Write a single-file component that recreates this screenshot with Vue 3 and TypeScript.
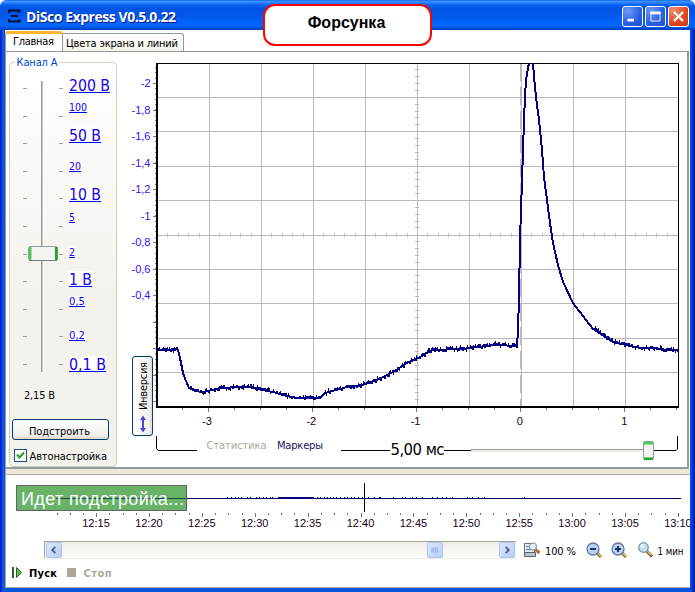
<script setup lang="ts">
interface RangeMark { text: string; base: number; width: number; big: boolean }
interface Speck { x: number; y: number; w: number; h: number }

const marks: RangeMark[] = [
  { text: '200 В', base: 91, width: 41, big: true },
  { text: '100', base: 111, width: 18, big: false },
  { text: '50 В', base: 141, width: 32, big: true },
  { text: '20', base: 170, width: 12, big: false },
  { text: '10 В', base: 200, width: 32, big: true },
  { text: '5', base: 221, width: 6, big: false },
  { text: '2', base: 256, width: 6, big: false },
  { text: '1 В', base: 285, width: 23, big: true },
  { text: '0,5', base: 305, width: 16, big: false },
  { text: '0,2', base: 339, width: 16, big: false },
  { text: '0,1 В', base: 370, width: 37, big: true },
]
const sliderTicks = [88, 116, 143, 171, 198, 226, 254, 281, 309, 336, 364]

const gridX = [209, 261, 313, 365, 417, 469, 521, 573, 625]
const gridY = [97, 131, 166, 200, 235, 269, 303, 338, 372]
const centreY = Array.from({ length: 50 }, (_, i) => i)
  .filter((i) => i % 5 !== 0)
  .map((i) => Math.round(62.5 + i * 6.87))
const centreX = Array.from({ length: 50 }, (_, i) => i)
  .filter((i) => i % 5 !== 0)
  .map((i) => Math.round(157 + i * 10.4))

const yLabels = ['-2', '-1,8', '-1,6', '-1,4', '-1,2', '-1', '-0,8', '-0,6', '-0,4']
const yMajor = Array.from({ length: 13 }, (_, i) => Math.round(83 + i * 26.5))
const yMinor = Array.from({ length: 65 }, (_, i) => Math.round(67 + i * 5.3)).filter((y) => y < 405)
const xLabels = ['-3', '-2', '-1', '0', '1']
const xTicks = Array.from({ length: 20 }, (_, i) => ({ x: Math.round(181.5 + i * 26.05), major: i % 4 === 1 }))

let seed = 11
function rnd(): number {
  seed = (seed * 1103515245 + 12345) % 2147483648
  return seed / 2147483648
}

const rising: [number, number][] = [
  [157, 350], [175, 350], [177, 348], [178, 350], [180, 358], [183, 373], [186, 381], [189, 388], [195, 391],
  [203, 392], [212, 390], [220, 388], [240, 387], [249, 387], [257, 389], [273, 392], [287, 396], [298, 398],
  [320, 398], [325, 393], [340, 389], [347, 387], [360, 386], [377, 380], [393, 372], [407, 363], [420, 357],
  [432, 350], [462, 349], [486, 346], [496, 345], [517, 346], [518, 330], [519, 297], [520, 240], [521, 210],
  [522, 180], [523, 150], [524, 120], [525, 97], [526, 80], [528, 68], [529, 63],
]
const falling: [number, number][] = [
  [533, 63], [534, 77], [536, 97], [539, 120],
  [542, 150], [544, 177], [547, 200], [550, 223], [553, 243], [558, 265], [563, 282], [573, 303], [586, 320],
  [593, 329], [601, 334], [613, 342], [626, 345], [640, 348], [656, 348], [663, 350], [678, 350],
]
const toPath = (pts: [number, number][]) => 'M' + pts.map(([x, y]) => `${x} ${y}`).join('L')
const wavePath = toPath(rising) + toPath(falling)

function specksFor(pts: [number, number][]): Speck[] {
  const out: Speck[] = []
  for (let i = 0; i < pts.length - 1; i++) {
    const [x0, y0] = pts[i]
    const [x1, y1] = pts[i + 1]
    if (Math.abs(y1 - y0) > (x1 - x0) * 0.9) continue
    for (let x = x0; x < x1; x++) {
      const r = rnd()
      const y = Math.round(y0 + ((y1 - y0) * (x - x0)) / (x1 - x0))
      if (r > 0.95) out.push({ x, y: y - 4, w: 1, h: 4 })
      else if (r > 0.78) out.push({ x, y: y - 3, w: 1, h: 3 })
      else if (r > 0.52) out.push({ x, y: y - 2, w: 2, h: 2 })
      else if (r < 0.05) out.push({ x, y, w: 1, h: 3 })
      else if (r < 0.2) out.push({ x, y, w: 2, h: 2 })
    }
  }
  return out
}
const specks = [...specksFor(rising), ...specksFor(falling)]

const times = ['12:15', '12:20', '12:25', '12:30', '12:35', '12:40', '12:45', '12:50', '12:55', '13:00', '13:05', '13:10']
const timeTicks = Array.from({ length: 48 }, (_, i) => ({ x: Math.round(56.5 + i * 13.22), major: i % 4 === 3 })).filter((t) => t.x < 682)
const blips = [227, 231, 235, 238, 241, 247, 250, 256, 259, 263, 266, 270, 272, 317, 320, 324, 327, 330, 333, 336,
  340, 344, 347, 351, 354, 358, 362, 368, 374, 379, 380, 393, 402, 405, 412, 416, 422, 432, 437, 442, 446, 452, 467, 472, 478, 484, 524]
</script>

<template>
  <div class="window">
    <header class="titlebar">
      <svg class="app-icon" width="13" height="14"><path d="M0 1.5h12M3 7h7M0 12.5h12M1 1v3M11.500 1v3M1 10v3M11.500 10v3" /></svg>
      <span class="title"><svg width="152" height="22"><text class="shade" x="0" y="16" textLength="150">DiSco Express V0.5.0.22</text><text x="-1" y="15" textLength="150">DiSco Express V0.5.0.22</text></svg></span>
      <div class="buttons">
        <svg class="wbtn" viewBox="0 0 21 21"><path d="M5 14.500h7" stroke-width="3" /></svg>
        <svg class="wbtn" viewBox="0 0 21 21"><path d="M5 6.500h11" stroke-width="3" /><path d="M5.500 5.500v10h10v-10" stroke-width="1" fill="none" /></svg>
        <svg class="wbtn close" viewBox="0 0 21 21"><path d="M5.500 5.500l10 10M15.500 5.500l-10 10" stroke-width="2.300" /></svg>
      </div>
    </header>
    <div class="callout">Форсунка</div>

    <main class="body">
      <nav class="tabs">
        <div class="tab active"><svg width="42" height="16"><text x="0" y="11" textLength="41">Главная</text></svg></div>
        <div class="tab"><svg width="113" height="16"><text x="0" y="11" textLength="112">Цвета экрана и линий</text></svg></div>
      </nav>

      <section class="page">
        <fieldset class="channel">
          <svg class="range" width="106" height="345" viewBox="10 63 106 345">
            <rect x="15" y="58" width="44" height="8" fill="#fff" />
            <text class="legend" x="16.500" y="66" textLength="41">Канал A</text>
            <rect x="41" y="81" width="1" height="291" fill="#9d9c99" />
            <rect x="42" y="81" width="1" height="291" fill="#c9c8be" />
            <rect x="43" y="82" width="1" height="290" fill="#fff" />
            <g v-for="y in sliderTicks" :key="y" fill="#a09f91">
              <rect x="23" :y="y" width="4" height="1" /><rect x="59" :y="y" width="4" height="1" />
            </g>
            <g v-for="m in marks" :key="m.text">
              <rect x="69" :y="m.base - (m.big ? 14 : 9)" :width="m.width" :height="m.big ? 16 : 11" fill="#fff" />
              <text class="mark" :class="{ big: m.big }" x="69" :y="m.base" :textLength="m.width" lengthAdjust="spacingAndGlyphs">{{ m.text }}</text>
              <rect x="69" :y="m.base + 1" :width="m.width" height="1" fill="#00f" />
            </g>
            <rect x="28.500" y="246.500" width="29" height="14" rx="2" fill="#f3f3ef" stroke="#8f9da8" />
            <rect x="29" y="247" width="2.500" height="13" fill="#4bd04b" />
            <rect x="55" y="247" width="2.500" height="13" fill="#22a522" />
            <path d="M29 260.500h28" stroke="#74828b" />
            <text x="24" y="399" textLength="31">2,15 В</text>
          </svg>
          <button class="tune"><svg width="62" height="16"><text x="0" y="13" textLength="61">Подстроить</text></svg></button>
          <label class="auto">
            <svg class="box" width="13" height="13"><rect x="0.500" y="0.500" width="12" height="12" /><path d="M3 5.500l2.500 3L10 3.500" /></svg>
            <svg width="79" height="16"><text x="-0.500" y="11" textLength="77.500">Автонастройка</text></svg>
          </label>
        </fieldset>

        <div class="invert-col">
          <button class="invert">
            <svg width="19" height="78" viewBox="133 357 19 78">
              <text transform="translate(147 410) rotate(-90)" x="0" y="0" textLength="48">Инверсия</text>
              <path d="M143 417v14" stroke="#4646d2" stroke-width="2" />
              <path d="M140 420l3-4.500 3 4.500zM140 428l3 4.500 3-4.500z" fill="#4646d2" />
            </svg>
          </button>
        </div>

        <svg class="chart" width="560" height="415" viewBox="125 52 560 415">
          <g shape-rendering="crispEdges">
            <rect v-for="x in gridX" :key="'v' + x" :x="x" y="63" width="1" height="343" fill="#b9b9b9" />
            <rect v-for="y in gridY" :key="'h' + y" x="157" :y="y" width="521" height="1" fill="#b9b9b9" />
            <rect v-for="y in centreY" :key="'cy' + y" x="415" :y="y" width="4" height="1" fill="#b9b9b9" />
            <rect v-for="x in centreX" :key="'cx' + x" :x="x" y="233" width="1" height="4" fill="#b9b9b9" />
            <path d="M520.500 63V406" stroke="#b9b9b9" stroke-dasharray="18 6" />
            <path d="M157 63.500H678.500V406" stroke="#000" fill="none" />
            <path class="wave" :d="wavePath" />
            <rect v-for="(s, i) in specks" :key="'s' + i" :x="s.x" :y="s.y" :width="s.w" :height="s.h" fill="#000080" />
            <rect x="156" y="63" width="2" height="345" />
            <rect x="157" y="406" width="522" height="2" />
            <rect v-for="y in yMajor" :key="'ym' + y" x="153" :y="y" width="3" height="1" fill="#777" />
            <rect v-for="y in yMinor" :key="'yn' + y" x="155" :y="y" width="1" height="1" fill="#777" />
            <rect v-for="t in xTicks" :key="'x' + t.x" :x="t.x" y="408" width="1" :height="t.major ? 4 : 2" fill="#777" />
          </g>
          <text v-for="(l, i) in yLabels" :key="l" class="num ylab" x="150.500" :y="87 + i * 26.5">{{ l }}</text>
          <text v-for="(l, i) in xLabels" :key="'t' + l" class="num xlab" :x="207 + i * 104.3" y="425">{{ l }}</text>
          <path d="M156.500 436V448.500L158 450.500H197M341 450.500H390M444 450.500H472M654 450.500H676L677.500 449V436" stroke="#000" fill="none" />
          <text class="off" x="206.500" y="449" textLength="60">Статистика</text>
          <text class="markers" x="277" y="449" textLength="46">Маркеры</text>
          <text class="scale" x="390.500" y="455" textLength="54">5,00 мс</text>
          <rect x="471" y="449" width="173" height="1" fill="#9d9c99" />
          <rect x="471" y="450" width="173" height="2" fill="#eeede5" />
          <rect x="643.500" y="441.500" width="10" height="18" rx="1.500" fill="#f3f3ef" stroke="#8f9da8" />
          <rect x="644" y="442" width="9" height="2.500" fill="#4bd04b" />
          <rect x="644" y="457.500" width="9" height="2.500" fill="#22a522" />
        </svg>
      </section>

      <section class="lower">
        <svg class="timeline" width="684" height="60" viewBox="6 475 684 60">
          <rect x="187" y="498" width="494" height="1" fill="#000060" />
          <rect v-for="b in blips" :key="b" :x="b" y="497" width="1" height="1" fill="#000080" />
          <rect x="278" y="497" width="36" height="2" fill="#000080" />
          <rect x="364" y="483" width="1" height="29" />
          <g fill="#777"><rect v-for="t in timeTicks" :key="t.x" :x="t.x" y="513" width="1" :height="t.major ? 4 : 2" /></g>
          <text v-for="(t, i) in times" :key="t" class="num xlab" :x="96 + i * 52.9" y="527">{{ t }}</text>
          <rect x="16.500" y="485.500" width="170" height="25" fill="#68b368" stroke="#626262" />
          <rect x="56" y="498" width="130" height="1" fill="#1c4f45" />
          <text class="status" x="21" y="505" textLength="163">Идет подстройка...</text>
        </svg>

        <div class="tools">
          <div class="scrollbar">
            <svg class="sbtn" viewBox="0 0 16 16"><path d="M9.500 4.500L6 8l3.500 3.500" /></svg>
            <svg class="sbtn thumb" viewBox="0 0 16 16"><path d="M4.500 5v6M6.500 5v6M8.500 5v6M10.500 5v6" /></svg>
            <svg class="sbtn" viewBox="0 0 16 16"><path d="M6.500 4.500L10 8l-3.500 3.500" /></svg>
          </div>
          <svg class="zooms" width="165" height="20" viewBox="522 540 165 20">
            <path d="M524.500 543.500h10v12h-10z" fill="#e4eaf1" stroke="#65717e" />
            <path d="M526 546.500h3M526 549.500h5" stroke="#65717e" />
            <path d="M524.500 552.500h11v4h-11z" fill="#bac4cf" stroke="#56616e" />
            <path d="M535.500 549.500l4 3.500" stroke="#b76f43" stroke-width="3" />
            <circle cx="533" cy="546.500" r="3.600" fill="#e6f2f9" stroke="#788998" />
            <text x="545" y="555" textLength="31">100 %</text>
            <path d="M597 553l4 4" stroke="#826719" stroke-width="3" /><path d="M597 552.500l4 4" stroke="#e9c457" stroke-width="1.500" />
            <circle cx="593" cy="549" r="6" fill="#b9d3ee" stroke="#6a78a0" stroke-width="1.300" /><path d="M590 549h6" stroke="#17366d" stroke-width="2" />
            <path d="M622 553l4 4" stroke="#826719" stroke-width="3" /><path d="M622 552.500l4 4" stroke="#e9c457" stroke-width="1.500" />
            <circle cx="618" cy="549" r="6" fill="#b9d3ee" stroke="#6a78a0" stroke-width="1.300" /><path d="M615 549h6M618 546v6" stroke="#17366d" stroke-width="2" />
            <path d="M647 551.500l5 5" stroke="#65542b" stroke-width="3" /><path d="M647.500 551.500l4 4" stroke="#e9c457" stroke-width="1.500" />
            <circle cx="643.500" cy="547.500" r="4.800" fill="#bfe0ee" stroke="#7790a0" stroke-width="1.200" /><circle cx="642.500" cy="546" r="2" fill="#e8f6fb" />
            <text x="657.500" y="555" textLength="26" lengthAdjust="spacingAndGlyphs">1 мин</text>
          </svg>
        </div>

        <div class="run">
          <svg width="110" height="18" viewBox="10 564 110 18">
            <rect x="12" y="567" width="2" height="11" fill="#1d6b1d" /><path d="M16.500 567.500v10l5-5z" fill="#5fb55f" stroke="#1d6b1d" />
            <text class="bold" x="29" y="577" textLength="28">Пуск</text>
            <rect x="67" y="568" width="9" height="9" fill="#aca899" />
            <text class="bold stop" x="83.500" y="577" textLength="28">Стоп</text>
          </svg>
        </div>
      </section>
    </main>
  </div>
</template>

<style>
body { margin: 0; background: #fff; }
</style>

<style scoped>
* { box-sizing: border-box; }
svg { display: block; flex: none; }
.window {
  position: relative; display: flex; flex-direction: column; width: 695px; height: 592px; overflow: hidden;
  border-radius: 7px 7px 0 0;
  background: linear-gradient(90deg, #0019cf 0, #0831d9 2px, #166aee 3px, #0855dd 4px, #0855dd 690px, #0048f0 691px, #0030c8 693px, #00138c 695px);
}
.window text { font: 11px "DejaVu Sans Condensed", "DejaVu Sans", "Noto Sans", sans-serif; fill: #000; }
.titlebar {
  display: flex; align-items: flex-start; height: 30px; flex: none; padding-left: 8px;
  background: linear-gradient(#0058e0 0, #3d95ff 1px, #2b7fff 3px, #0462ee 5px, #0055e5 8px, #0055e5 14px, #0262f8 21px, #0066ff 26px, #0050d8 28px, #003fc0 30px);
}
.app-icon { margin-top: 9px; }
.app-icon path { stroke: #06112c; stroke-width: 2; fill: none; }
.title { margin: 7px 0 0 6px; }
.window .title text { font: bold 14px "Open Sans", "Noto Sans", sans-serif; fill: #fff; }
.window .title .shade { fill: #0a1883; }
.buttons { display: flex; gap: 2px; margin: 6px 6px 0 auto; }
.wbtn { width: 21px; height: 21px; border: 1px solid #fff; border-radius: 3px; background: radial-gradient(circle at 25% 20%, #6f9bf5, #2a5fe0 60%, #1e4fd0); }
.wbtn path { stroke: #fff; }
.close { background: radial-gradient(circle at 25% 20%, #f09070, #e0481f 60%, #c83a10); }
.callout {
  position: absolute; left: 263px; top: 4px; width: 169px; height: 42px; border: 2px solid #f00; border-radius: 12px;
  background: #fff; font: bold 16px/34px "Liberation Sans", Arial, sans-serif; text-align: center; padding-right: 2px;
}
.body { display: flex; flex-direction: column; width: 685px; height: 558px; margin-left: 5px; background: #fff; }
.tabs { display: flex; align-items: flex-end; height: 21px; flex: none; }
.tab { height: 18px; width: 121px; padding: 2px 0 0 3px; border: 1px solid #919b9c; border-left: 0; border-bottom: 0; border-radius: 0 3px 0 0; background: linear-gradient(#fff, #f3f2ea); }
.tab.active { width: 58px; height: 20px; padding: 0 0 0 7px; border-top: 3px solid #ffb533; border-radius: 3px 3px 0 0; border-left: 1px solid #919b9c; background: #fff; }
.page { display: flex; height: 418px; width: 684px; flex: none; border: 1px solid #919b9c; border-right-width: 2px; border-bottom-width: 2px; background: #fff; overflow: hidden; }
.channel { display: flex; flex-direction: column; width: 108px; min-width: 0; height: 405px; margin: 10px 0 0 3px; padding: 0; border: 1px solid #d0d0bf; border-radius: 4px; background: linear-gradient(#fff, #f3f2ec 60%); flex: none; }
.range { overflow: visible; }
.range .legend { fill: #0046d5; }
.range .mark { fill: #1400f0; }
.range .mark.big { font-size: 16.5px; }
.tune { display: flex; width: 97px; height: 21px; margin: 11px 0 0 2px; padding: 2px 0 0 16px; border: 1px solid #003c74; border-radius: 3px; background: linear-gradient(#fff, #f1f0ea 80%, #dcd8cc); flex: none; }
.auto { display: flex; gap: 3px; margin: 9px 0 0 4px; }
.box rect { fill: #fff; stroke: #1c5180; }
.box path { fill: none; stroke: #21a121; stroke-width: 2; }
.invert-col { display: flex; align-items: flex-start; width: 36px; margin-right: -33px; padding: 304px 0 0 15px; flex: none; z-index: 1; }
.invert { width: 21px; height: 80px; padding: 0; border: 1px solid #003c74; border-radius: 3px; background: linear-gradient(90deg, #fff, #f1f0ea 85%, #dcd8cc); flex: none; }
.chart { margin-left: 5px; }
.wave { fill: none; stroke: #000080; stroke-width: 2; }
.window .num { font: 11px "Liberation Sans", Arial, sans-serif; }
.window .ylab { text-anchor: end; fill: #3a0cff; }
.window .xlab { text-anchor: middle; fill: #180018; }
.window .off { fill: #aca899; }
.window .markers { fill: #14145a; }
.window .scale { font-size: 16.5px; }
.lower { display: flex; flex-direction: column; height: 119px; padding-top: 6px; flex: none; background: linear-gradient(#ece9d8 5px, #aca899 5px, #aca899 6px, #fff 6px); border-left: 1px solid #aca899; border-bottom: 1px solid #aca899; }
.window .status { font: 18px "Liberation Sans", Arial, sans-serif; fill: #fff; }
.tools { display: flex; height: 26px; padding: 6px 0 0 38px; }
.scrollbar { display: flex; width: 472px; height: 18px; padding: 0 1px 0 1px; border-top: 1px solid #a7a691; border-left: 1px solid #a7a691; background: linear-gradient(#eeede5, #fefefb); border-bottom: 1px solid #eeede5; }
.sbtn { width: 16px; height: 16px; border: 1px solid #b0c4f0; border-radius: 2px; background: linear-gradient(135deg, #dbe6ff, #b9cdfa); }
.sbtn path { fill: none; stroke: #4d6185; stroke-width: 2.200; }
.thumb { margin: 0 56px 0 auto; }
.thumb path { stroke: #8ca4de; stroke-width: 1; }
.zooms { margin: -1px 0 0 6px; }
.run { padding: 3px 0 0 4px; }
.window .bold { font-weight: bold; }
.window .stop { fill: #aca899; }
</style>
